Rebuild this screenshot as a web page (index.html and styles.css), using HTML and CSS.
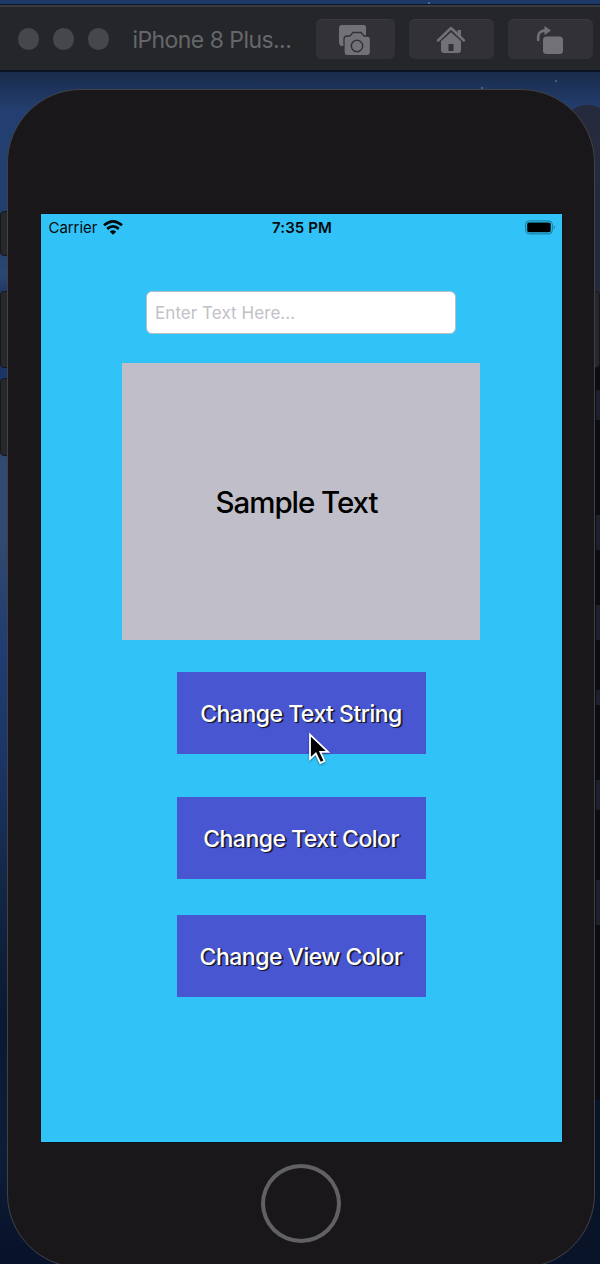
FILE: index.html
```html
<!DOCTYPE html>
<html lang="en">
<head>
<meta charset="utf-8">
<title>iPhone 8 Plus</title>
<link rel="stylesheet" href="styles.css">
</head>
<body>
<div class="desktop">
  <svg class="wallpaper" viewBox="0 0 600 1264" aria-hidden="true">
    <path fill="#252b3c" d="M573 109Q587 101 600 108V400H590Z"/>
    <path fill="#242a3a" d="M594 180h6v110h-6z"/>
    <path fill="#0b0d15" d="M594 365h6v735h-6z"/>
    <path fill="#1c202b" d="M596 390h4v30h-4zM596 515h4v35h-4zM596 605h4v35h-4zM596 690h4v15h-4zM596 780h4v30h-4zM596 880h4v45h-4z"/>
    <path fill="#0a1428" d="M560 1100h40v164h-40z"/>
    <g fill="#8fa3c8"><circle cx="429" cy="3" r=".8"/><circle cx="482" cy="88" r=".8"/><circle cx="556" cy="81" r=".7"/></g>
  </svg>
  <header class="toolbar">
    <div class="lights"><i class="light"></i><i class="light"></i><i class="light"></i></div>
    <div class="title">iPhone 8 Plus...</div>
    <div class="tools">
      <div class="tool tool-shot">
        <svg width="32" height="32" viewBox="0 0 32 32">
          <path fill="#727276" d="M3 1H25Q27 1 27 3V13H24L22 9H14L12 13H5V22H3Q0 22 0 18V4Q0 1 3 1Z"/>
          <path fill="#727276" stroke="#323236" stroke-width="1.3" d="M8 12H11L14 8.500H22L25 12H28Q31.500 12 31.500 15V28Q31.500 31.600 28 31.600H8Q5 31.600 5 28V15Q5 12 8 12Z"/>
          <circle cx="18" cy="22" r="5.700" fill="none" stroke="#323236" stroke-width="1.500"/>
        </svg>
      </div>
      <div class="tool tool-home">
        <svg width="30" height="28" viewBox="0 0 30 28">
          <path fill="#727276" d="M15 5.500L25 14.500V24Q25 27 22 27H8Q5 27 5 24V14.500Z"/>
          <path fill="none" stroke="#323236" stroke-width="5" d="M1 15.500L15 3L29 15.500"/>
          <path fill="#727276" d="M21.500 4h3.500v6.500l-3.500-3z"/>
          <path fill="none" stroke="#727276" stroke-width="2.500" stroke-linecap="round" stroke-linejoin="round" d="M2 14.500L15 2L28 14.500"/>
          <path fill="#323236" d="M12.500 18h5v7h-5z"/>
        </svg>
      </div>
      <div class="tool tool-rotate">
        <svg width="28" height="28" viewBox="0 0 28 28">
          <rect x="7" y="10.500" width="20" height="17.500" rx="3.500" fill="#727276"/>
          <path fill="none" stroke="#727276" stroke-width="2.500" stroke-linecap="round" d="M2.200 14Q1 5 9 4.500"/>
          <path fill="#727276" d="M8.500 0L15 4.500L8.500 9Z"/>
        </svg>
      </div>
    </div>
  </header>

  <main class="stage">
    <i class="side-key key-mute"></i><i class="side-key key-up"></i><i class="side-key key-down"></i><i class="side-key key-power"></i>
    <div class="phone">
      <div class="screen">
        <div class="status">
          <div class="carrier"><span>Carrier</span>
            <svg width="20" height="15" viewBox="0 0 20 15">
              <g fill="none" stroke="#04090c" stroke-width="2.700"><path d="M1 5.300Q10-2.500 19 5.300"/><path d="M4.200 8.900Q10 4 15.800 8.900"/></g>
              <path fill="#04090c" d="M6.800 11.700Q10 9 13.200 11.700L10 14.800Z"/>
            </svg>
          </div>
          <div class="clock">7:35 PM</div>
          <svg class="battery" width="31" height="15" viewBox="0 0 31 15">
            <rect x=".7" y=".9" width="26.600" height="13" rx="3.500" fill="none" stroke="#147497"/>
            <rect x="2.200" y="2.500" width="23.500" height="9.800" rx="1.800"/>
            <path fill="#147497" d="M28.800 5.200Q30.800 7.400 28.800 9.500Z"/>
          </svg>
        </div>
        <div class="field"><span class="placeholder">Enter Text Here...</span></div>
        <div class="sample"><span class="sample-text">Sample Text</span></div>
        <div class="buttons">
          <div class="button"><span>Change Text String</span></div>
          <div class="button"><span>Change Text Color</span></div>
          <div class="button"><span>Change View Color</span></div>
        </div>
      </div>
      <div class="home-button"></div>
    </div>
  </main>
  <svg class="pointer" width="24" height="36" viewBox="0 0 24 36">
    <path fill="#000" stroke="#fff" stroke-width="1.800" d="M2 2.500V27L7.800 21.500L12.300 31L16.500 29L12.300 19.800H20Z"/>
  </svg>
</div>
</body>
</html>
```
FILE: styles.css
```css
* { box-sizing: border-box; }
body { margin: 0; font-family: Inter, "Liberation Sans", sans-serif; }

.desktop {
  position: relative;
  display: flex;
  flex-direction: column;
  width: 600px;
  height: 1264px;
  padding-top: 4px;
  overflow: hidden;
  background: linear-gradient(#1c3968 0, #1b2d4e 75px, #233e70 110px, #233f70 240px, #2b4774 275px, #14284f 310px, #1b356a 375px, #304a72 465px, #304a70 540px, #203c72 650px, #1b3566 760px, #132746 880px, #0b1930 1020px, #0e1d35 1150px, #07122a 1264px);
}
.wallpaper { position: absolute; inset: 0; width: 600px; height: 1264px; }

.toolbar {
  position: relative;
  flex: none;
  display: flex;
  align-items: center;
  height: 68px;
  padding-left: 17.500px;
  padding-top: 3px;
  background: #25262a;
  border-top: 1px solid #09172b;
  border-bottom: 2px solid #0a1321;
  box-shadow: inset 0 2px #3b3c40;
}
.lights { flex: none; display: flex; gap: 13.700px; }
.light { width: 21.500px; height: 21.500px; border-radius: 50%; background: #46474b; }
.title { flex: none; width: 206.600px; padding-left: 23px; padding-top: 1px; color: #66676b; font-size: 23px; line-height: 30px; letter-spacing: -.55px; white-space: nowrap; }
.tools { flex: none; display: flex; gap: 14px; }
.tool {
  display: flex;
  align-items: center;
  justify-content: center;
  width: 85px;
  height: 40px;
  border-radius: 6px;
  background: #323236;
  border-top: 1px solid #3b3b3f;
}
.tool-shot { width: 79px; }

.stage { position: relative; flex: none; height: 1192px; padding: 17px 5px 0 7px; }
.phone {
  position: relative;
  display: flex;
  flex-direction: column;
  align-items: center;
  width: 588px;
  height: 1179px;
  padding-top: 124px;
  border: 1px solid #414247;
  border-radius: 74px;
  background: #19171a;
}
.side-key { position: absolute; width: 12px; border: 1px solid #151619; border-radius: 4px; background: #27282a; }
.key-mute { left: 0; top: 139px; height: 45px; }
.key-up { left: 0; top: 219px; height: 77px; }
.key-down { left: 0; top: 306px; height: 78px; }
.key-power { right: 0; top: 219px; height: 77px; }

.screen {
  display: flex;
  flex-direction: column;
  align-items: center;
  width: 521px;
  height: 928px;
  background: #31c3f7;
  box-shadow: 0 0 0 1px #0d1419;
}
.status {
  display: grid;
  grid-template-columns: 1fr auto 1fr;
  align-items: center;
  width: 100%;
  height: 27px;
  padding: 0 6px 0 8px;
  font-size: 15px;
  color: #04090c;
}
.carrier { display: flex; align-items: center; gap: 6px; letter-spacing: -.05px; }
.clock { font-weight: 600; letter-spacing: .1px; }
.battery { justify-self: end; }

.field {
  display: flex;
  align-items: center;
  width: 310px;
  height: 43px;
  margin-top: 50px;
  padding-left: 8px;
  border: 1px solid #b9bec6;
  border-radius: 6px;
  background: #fff;
}
.placeholder { color: #c2c1c7; font-size: 17px; letter-spacing: .06px; white-space: nowrap; }
.sample {
  display: flex;
  align-items: center;
  justify-content: center;
  width: 358px;
  height: 277px;
  margin-top: 29px;
  padding-right: 9px;
  background: #c0bfc9;
}
.sample-text { padding-top: 1px; color: #000; font-size: 29.500px; font-weight: 500; letter-spacing: -1.050px; white-space: nowrap; }
.buttons { display: flex; flex-direction: column; margin-top: 32px; }
.button {
  display: flex;
  align-items: center;
  justify-content: center;
  width: 249px;
  height: 82px;
  padding-top: 1px;
  margin-bottom: 43px;
  background: #4956d2;
  color: #fff;
  font-size: 23px;
  font-weight: 500;
  letter-spacing: -.5px;
  white-space: nowrap;
  text-shadow: 1px 1px 1px #17192d, 2px 1px #25294b;
}
.button + .button { margin-bottom: 36px; }

.home-button { width: 80px; height: 79px; margin-top: 22px; border: 4px solid #616163; border-radius: 50%; }
.pointer { position: absolute; left: 308px; top: 732px; filter: drop-shadow(0 1px 1px rgba(0, 0, 0, .4)); }
```
